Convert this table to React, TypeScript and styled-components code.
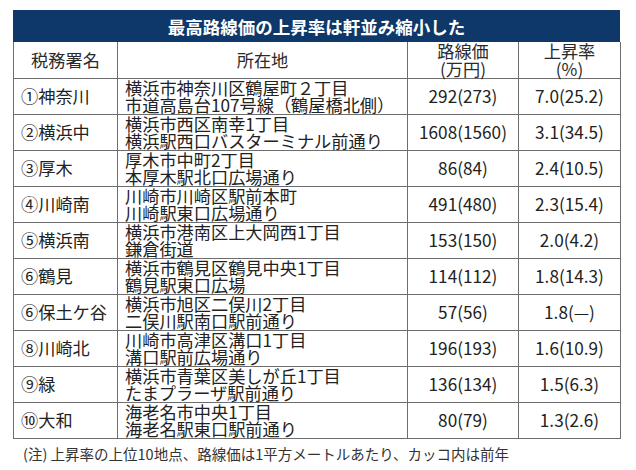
import React from "react";
import styled, { createGlobalStyle } from "styled-components";

const Global = createGlobalStyle`
  html, body { margin: 0; padding: 0; background: #ffffff; }
  body { font-family: "Noto Sans CJK JP", "Noto Sans", sans-serif; color: #222; }
`;

const Page = styled.div`
  padding: 10px 16px 0 13px;
  width: 607px;
`;

const Title = styled.div`
  height: 32px;
  background: #0e386a;
  color: #ffffff;
  font-weight: 700;
  font-size: 17.5px;
  display: flex;
  align-items: center;
  justify-content: center;
`;

const Table = styled.table`
  border-collapse: collapse;
  width: 607px;
  table-layout: fixed;
  font-size: 17.2px;
  line-height: 17.5px;
`;

const Col = styled.col<{ $w: number }>`
  width: ${(p) => p.$w}px;
`;

const Row = styled.tr`
  height: 36px;
`;

const Th = styled.th`
  border: 1px solid #6e6e6e;
  border-top: none;
  font-weight: 400;
  text-align: center;
  vertical-align: middle;
  padding: 0;
  color: #2a2a2a;
`;

const Td = styled.td<{ $align?: "left" | "center" }>`
  border: 1px solid #6e6e6e;
  padding: ${(p) => (p.$align === "center" ? "0" : "0 0 0 7px")};
  text-align: ${(p) => p.$align ?? "left"};
  vertical-align: middle;
  color: #222;
  white-space: nowrap;
`;

const Line = styled.div``;

const Note = styled.div`
  margin-top: 6px;
  padding-left: 10px;
  font-size: 14.5px;
  line-height: 18px;
  color: #333;
`;

type R = { name: string; a1: string; a2: string; price: string; rate: string };

const rows: R[] = [
  { name: "①神奈川", a1: "横浜市神奈川区鶴屋町２丁目", a2: "市道高島台107号線（鶴屋橋北側）", price: "292(273)", rate: "7.0(25.2)" },
  { name: "②横浜中", a1: "横浜市西区南幸1丁目", a2: "横浜駅西口バスターミナル前通り", price: "1608(1560)", rate: "3.1(34.5)" },
  { name: "③厚木", a1: "厚木市中町2丁目", a2: "本厚木駅北口広場通り", price: "86(84)", rate: "2.4(10.5)" },
  { name: "④川崎南", a1: "川崎市川崎区駅前本町", a2: "川崎駅東口広場通り", price: "491(480)", rate: "2.3(15.4)" },
  { name: "⑤横浜南", a1: "横浜市港南区上大岡西1丁目", a2: "鎌倉街道", price: "153(150)", rate: "2.0(4.2)" },
  { name: "⑥鶴見", a1: "横浜市鶴見区鶴見中央1丁目", a2: "鶴見駅東口広場", price: "114(112)", rate: "1.8(14.3)" },
  { name: "⑥保土ケ谷", a1: "横浜市旭区二俣川2丁目", a2: "二俣川駅南口駅前通り", price: "57(56)", rate: "1.8(—)" },
  { name: "⑧川崎北", a1: "川崎市高津区溝口1丁目", a2: "溝口駅前広場通り", price: "196(193)", rate: "1.6(10.9)" },
  { name: "⑨緑", a1: "横浜市青葉区美しが丘1丁目", a2: "たまプラーザ駅前通り", price: "136(134)", rate: "1.5(6.3)" },
  { name: "⑩大和", a1: "海老名市中央1丁目", a2: "海老名駅東口駅前通り", price: "80(79)", rate: "1.3(2.6)" },
];

export default function App() {
  return (
    <>
      <Global />
      <Page>
        <Title>最高路線価の上昇率は軒並み縮小した</Title>
        <Table>
          <colgroup>
            <Col $w={104} />
            <Col $w={290} />
            <Col $w={111} />
            <Col $w={102} />
          </colgroup>
          <thead>
            <Row>
              <Th>税務署名</Th>
              <Th>所在地</Th>
              <Th>
                <Line>路線価</Line>
                <Line>(万円)</Line>
              </Th>
              <Th>
                <Line>上昇率</Line>
                <Line>(%)</Line>
              </Th>
            </Row>
          </thead>
          <tbody>
            {rows.map((r) => (
              <Row key={r.name + r.a1}>
                <Td>{r.name}</Td>
                <Td>
                  <Line>{r.a1}</Line>
                  <Line>{r.a2}</Line>
                </Td>
                <Td $align="center">{r.price}</Td>
                <Td $align="center">{r.rate}</Td>
              </Row>
            ))}
          </tbody>
        </Table>
        <Note>(注) 上昇率の上位10地点、路線価は1平方メートルあたり、カッコ内は前年</Note>
      </Page>
    </>
  );
}
